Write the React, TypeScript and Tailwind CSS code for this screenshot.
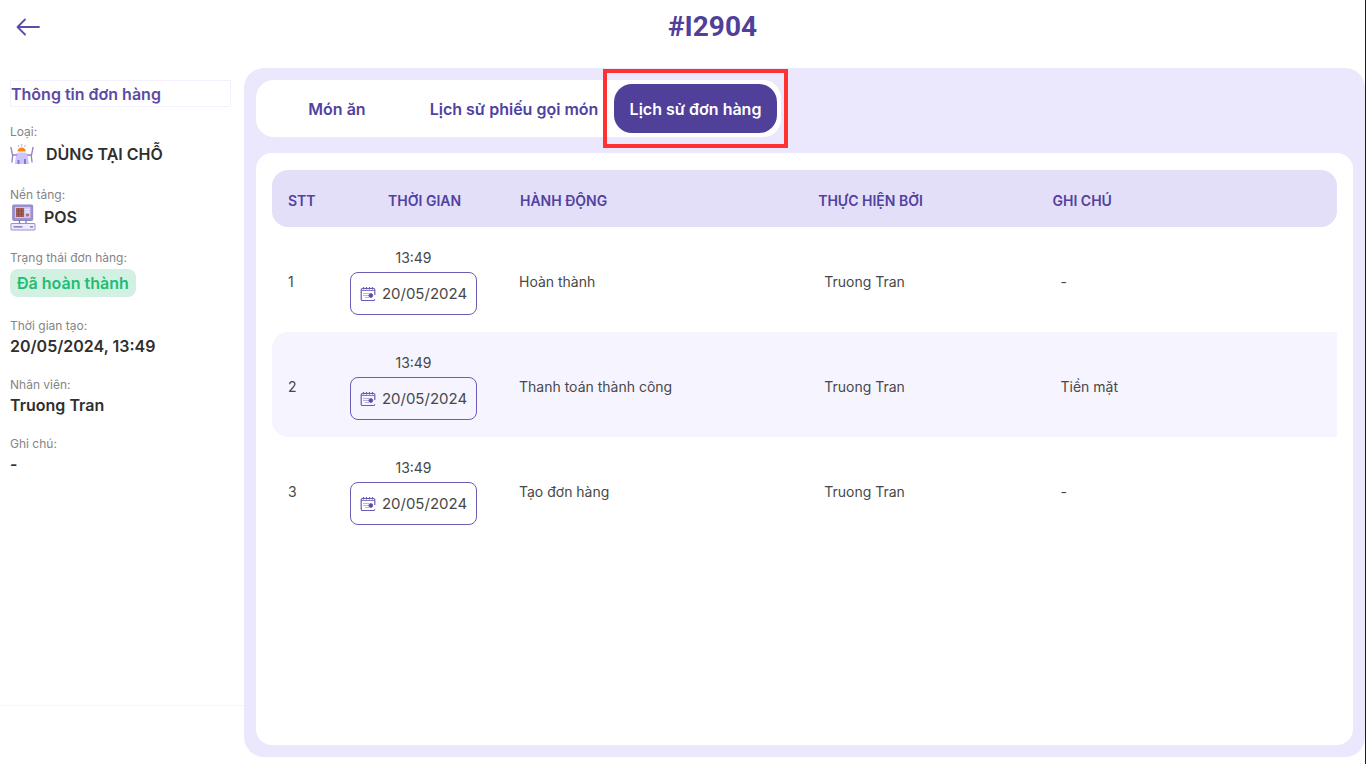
import type { ReactNode } from "react";

type HistoryRow = {
  id: number;
  time: string;
  date: string;
  action: string;
  by: string;
  note: string;
};

const rows: HistoryRow[] = [
  { id: 1, time: "13:49", date: "20/05/2024", action: "Hoàn thành", by: "Truong Tran", note: "-" },
  { id: 2, time: "13:49", date: "20/05/2024", action: "Thanh toán thành công", by: "Truong Tran", note: "Tiền mặt" },
  { id: 3, time: "13:49", date: "20/05/2024", action: "Tạo đơn hàng", by: "Truong Tran", note: "-" },
];

function BackIcon() {
  return (
    <svg width="24" height="18" viewBox="0 0 24 18" fill="none" stroke="#5d4da8" strokeWidth="1.8" strokeLinecap="round" strokeLinejoin="round" aria-hidden="true">
      <path d="M23 9H1.500M9 1.500 1.500 9 9 16.500" />
    </svg>
  );
}

function DineInIcon() {
  return (
    <svg width="24" height="22" viewBox="0 0 24 22" fill="none" aria-hidden="true">
      <path d="M4.800 21 6 12.500C6.200 10.500 7 9.500 8.500 9.500h6.500c1.500 0 2.300 1 2.500 3L19 21Z" fill="#cdc5fd" />
      <path d="M7.500 17h2v4h-2zM14 16h2v5h-2z" fill="#8577cb" />
      <path d="M7.500 8.500c.3-5.200 8-5.200 8.300 0Z" fill="#fb8312" />
      <path d="M11.800 3.500V1M9 3.800 8.200 2M14.600 3.800l.8-1.800" stroke="#aaa0d5" strokeWidth=".9" />
      <path d="M1 4.500 2.500 12h4M2.700 12.500 2 19M23 4.500 21.500 12h-4M21.300 12.500l.7 6.500" stroke="#8f82cb" strokeWidth="1.300" strokeLinecap="round" />
    </svg>
  );
}

function PosIcon() {
  return (
    <svg width="26" height="27" viewBox="0 0 26 27" fill="none" aria-hidden="true">
      <rect x="2.700" y="1" width="20" height="15.500" rx="1" fill="#9c92cf" stroke="#9187c6" />
      <rect x="5" y="3" width="15.500" height="11" fill="#cdc6f3" />
      <rect x="6" y="4" width="8" height="9" fill="#ad604f" />
      <path d="M8.500 4v9M11.500 4v9M6 7h8M6 10h8" stroke="#7d4c5c" strokeWidth=".8" />
      <path d="M15.500 5.500h4M15.500 7.800h4" stroke="#f4f1ff" strokeWidth="1.200" />
      <circle cx="17.500" cy="11" r="1.600" fill="#bb6a55" />
      <path d="M9.500 16.500v3M16 16.500v3" stroke="#7668b3" strokeWidth="1.200" />
      <rect x="1" y="19.500" width="24" height="6.500" rx=".5" fill="#eeeaff" stroke="#9a8fce" />
      <path d="M3.500 22.800h9M20 22.800h3" stroke="#7668b3" strokeWidth="1.300" />
    </svg>
  );
}

function CalendarIcon() {
  return (
    <svg width="16" height="16" viewBox="0 0 16 16" fill="none" stroke="#6a5bb3" aria-hidden="true">
      <path d="M14.800 9V3.800c0-.8-.5-1.300-1.300-1.300h-11c-.8 0-1.300.5-1.300 1.300v9.400c0 .8.5 1.300 1.300 1.300h11c.8 0 1.300-.4 1.300-1.200" strokeWidth="1.200" />
      <path d="M1.500 4.500h13" strokeWidth=".8" />
      <path d="M3.500 1v2.500M6.500 1v2.500M9.500 1v2.500M12.500 1v2.500" strokeWidth="1.200" />
      <path d="M3.500 7.500h1M5.500 7.500h1M7.500 7.500h1M3.500 9.500h1M5.500 9.500h1M7.500 9.500h1M5.500 11.500h1M7.500 11.500h1" strokeWidth=".9" />
      <circle cx="10.800" cy="9.500" r="1.900" fill="#5848a4" />
    </svg>
  );
}

function Info({ label, tall, children }: { label: string; tall?: string; children: ReactNode }) {
  return (
    <div>
      <dt className="text-xs leading-4 text-[#858585]">{label}</dt>
      <dd className={`flex items-center text-base font-semibold text-[#2f2f2f] ${tall ?? "h-6"}`}>{children}</dd>
    </div>
  );
}

export default function App() {
  return (
    <div className="flex min-h-[calc(100vh-4px)] flex-col border-r border-[#1c1733] bg-white font-['Inter','Noto_Sans',sans-serif] text-[#484848]">
      <header className="flex h-[68px] items-center px-4 pb-[15px]">
        <button type="button" aria-label="Quay lại" className="pr-5">
          <BackIcon />
        </button>
        <h1 className="flex-1 pl-4 text-center font-['Roboto',sans-serif] text-[28px] leading-8 font-bold text-[#50409a]">#I2904</h1>
      </header>

      <div className="flex flex-1">
        <aside className="mb-[58px] w-[244px] shrink-0 border-b border-[#f6f4ff] px-[10px] pt-3">
          <h2 className="mr-[3px] border border-[#f3f0ff] pt-px text-base leading-6 font-semibold text-[#5b4ba6]">
            Thông tin đơn hàng
          </h2>
          <dl className="mt-[17px] flex flex-col gap-[19px]">
            <Info label="Loại:" tall="h-7 gap-3">
              <DineInIcon />
              DÙNG TẠI CHỖ
            </Info>
            <Info label="Nền tảng:" tall="h-7 gap-2">
              <PosIcon />
              POS
            </Info>
            <Info label="Trạng thái đơn hàng:" tall="h-[33px]">
              <span className="rounded-lg bg-[#d3f1e3] px-[7px] leading-7 text-[#20bd70]">Đã hoàn thành</span>
            </Info>
            <Info label="Thời gian tạo:">20/05/2024, 13:49</Info>
            <Info label="Nhân viên:">Truong Tran</Info>
            <Info label="Ghi chú:">-</Info>
          </dl>
        </aside>

        <main className="mb-[7px] flex min-w-0 flex-1 flex-col items-start gap-4 rounded-[20px] bg-[#ebe8fe] p-3">
          <nav className="flex h-[57px] rounded-[18px] bg-white p-1 text-base font-semibold whitespace-nowrap text-[#5141a0]">
            <button type="button" className="min-w-[154px] px-[15px]">Món ăn</button>
            <button type="button" className="min-w-[200px] px-[15px]">Lịch sử phiếu gọi món</button>
            <button type="button" aria-current="page" className="relative min-w-[163px] rounded-[18px] bg-[#50409a] px-[15px] text-white">
              Lịch sử đơn hàng
              <span className="pointer-events-none absolute -inset-x-[11px] -inset-y-[15px] border-4 border-[#ff3131]" />
            </button>
          </nav>

          <section className="w-full flex-1 rounded-2xl bg-white px-4 pt-[17px] pb-4">
            <table className="w-full table-fixed border-separate border-spacing-0 text-left text-sm">
              <colgroup>
                <col className="w-[78px]" />
                <col className="w-[154px]" />
                <col className="w-[28%]" />
                <col className="w-[22%]" />
                <col />
              </colgroup>
              <thead>
                <tr className="h-[57px] text-[#5141a0]">
                  <th className="rounded-l-2xl bg-[#e3dff8] pt-1 pl-4 font-semibold">STT</th>
                  <th className="bg-[#e3dff8] pt-1 pl-[38px] font-semibold">THỜI GIAN</th>
                  <th className="bg-[#e3dff8] pt-1 pl-4 font-semibold">HÀNH ĐỘNG</th>
                  <th className="bg-[#e3dff8] pt-1 pl-4 font-semibold">THỰC HIỆN BỞI</th>
                  <th className="rounded-r-2xl bg-[#e3dff8] pt-1 pl-4 font-semibold">GHI CHÚ</th>
                </tr>
              </thead>
              <tbody>
                {rows.map((row) => (
                  <tr key={row.id} className="h-[105px] even:bg-[#f6f4ff]">
                    <td className="rounded-l-2xl pt-1 pl-4">{row.id}</td>
                    <td className="pt-1">
                      <div className="flex w-[127px] flex-col items-center gap-1">
                        <span className="leading-5">{row.time}</span>
                        <span className="flex h-[43px] w-full items-center justify-center gap-1.5 rounded-lg border border-[#6b5cb5] pt-px text-[15px]">
                          <CalendarIcon />
                          {row.date}
                        </span>
                      </div>
                    </td>
                    <td className="pt-1 pl-[15px]">{row.action}</td>
                    <td className="pt-1 pl-[22px]">{row.by}</td>
                    <td className="pt-1 pl-6">{row.note}</td>
                  </tr>
                ))}
              </tbody>
            </table>
          </section>
        </main>
      </div>
    </div>
  );
}
